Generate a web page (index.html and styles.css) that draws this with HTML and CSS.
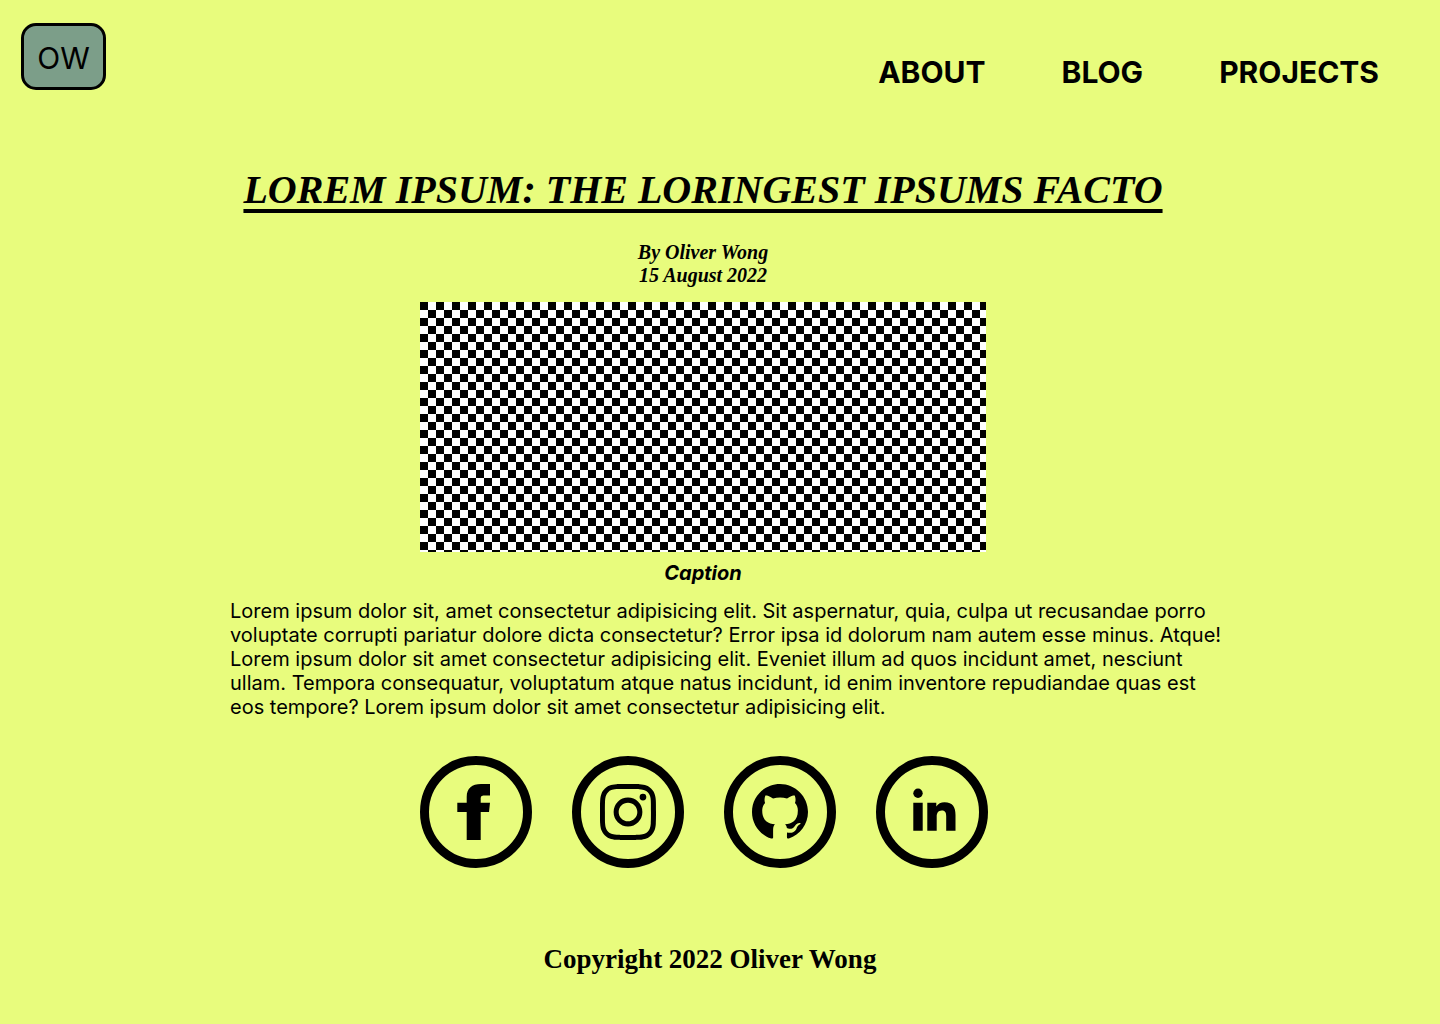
FILE: index.html
```html
<!DOCTYPE html>
<html lang="en">
<head>
<meta charset="utf-8">
<meta name="viewport" content="width=device-width, initial-scale=1">
<title>Oliver Wong</title>
<link rel="stylesheet" href="styles.css">
</head>
<body>
<header class="site-header">
  <a class="logo" href="#">OW</a>
  <nav class="site-nav">
    <a href="#">ABOUT</a>
    <a href="#">BLOG</a>
    <a href="#">PROJECTS</a>
  </nav>
</header>
<main class="post">
  <div class="post-head">
    <h1 class="title">LOREM IPSUM: THE LORINGEST IPSUMS FACTO</h1>
    <p class="byline">By Oliver Wong<br>15 August 2022</p>
    <figure class="figure">
      <div class="checker"></div>
      <figcaption>Caption</figcaption>
    </figure>
  </div>
  <p class="text">Lorem ipsum dolor sit, amet consectetur adipisicing elit. Sit aspernatur, quia, culpa ut recusandae porro voluptate corrupti pariatur dolore dicta consectetur? Error ipsa id dolorum nam autem esse minus. Atque! Lorem ipsum dolor sit amet consectetur adipisicing elit. Eveniet illum ad quos incidunt amet, nesciunt ullam. Tempora consequatur, voluptatum atque natus incidunt, id enim inventore repudiandae quas est eos tempore? Lorem ipsum dolor sit amet consectetur adipisicing elit.</p>
  <div class="socials">
    <a href="#" aria-label="Facebook"><svg viewBox="0 0 56 56"><path d="M32.700 56H18.700V28H9.300V18.700H18.700V13C18.700 4 24 0 33 0H42V11.500H36.500C33.300 11.500 32.700 12.500 32.700 15V18.700H42L41 28H32.700Z"/></svg></a>
    <a href="#" aria-label="Instagram"><svg viewBox="0 0 24 24"><path d="M12 0C8.740 0 8.333.015 7.053.072 5.775.132 4.905.333 4.140.630c-.789.306-1.459.717-2.126 1.384S.935 3.350.630 4.140C.333 4.905.131 5.775.072 7.053.012 8.333 0 8.740 0 12s.015 3.667.072 4.947c.060 1.277.261 2.148.558 2.913.306.788.717 1.459 1.384 2.126.667.666 1.336 1.079 2.126 1.384.766.296 1.636.499 2.913.558C8.333 23.988 8.740 24 12 24s3.667-.015 4.947-.072c1.277-.060 2.148-.262 2.913-.558.788-.306 1.459-.718 2.126-1.384.666-.667 1.079-1.335 1.384-2.126.296-.765.499-1.636.558-2.913.060-1.280.072-1.687.072-4.947s-.015-3.667-.072-4.947c-.060-1.277-.262-2.149-.558-2.913-.306-.789-.718-1.459-1.384-2.126C21.319 1.347 20.651.935 19.860.630c-.765-.297-1.636-.499-2.913-.558C15.667.012 15.260 0 12 0zm0 2.160c3.203 0 3.585.016 4.850.071 1.170.055 1.805.249 2.227.415.562.217.960.477 1.382.896.419.420.679.819.896 1.381.164.422.360 1.057.413 2.227.057 1.266.070 1.646.070 4.850s-.015 3.585-.074 4.850c-.061 1.170-.256 1.805-.421 2.227-.224.562-.479.960-.899 1.382-.419.419-.824.679-1.380.896-.420.164-1.065.360-2.235.413-1.274.057-1.649.070-4.859.070-3.211 0-3.586-.015-4.859-.074-1.171-.061-1.816-.256-2.236-.421-.569-.224-.960-.479-1.379-.899-.421-.419-.690-.824-.900-1.380-.165-.420-.359-1.065-.420-2.235-.045-1.260-.061-1.649-.061-4.844 0-3.196.016-3.586.061-4.861.061-1.170.255-1.814.420-2.234.210-.570.479-.960.900-1.381.419-.419.810-.689 1.379-.898.420-.166 1.051-.361 2.221-.421 1.275-.045 1.650-.060 4.859-.060zm0 3.678a6.162 6.162 0 100 12.324 6.162 6.162 0 100-12.324zM12 16c-2.210 0-4-1.790-4-4s1.790-4 4-4 4 1.790 4 4-1.790 4-4 4zm7.846-10.405a1.440 1.440 0 11-2.880 0 1.440 1.440 0 012.880 0z"/></svg></a>
    <a href="#" aria-label="GitHub"><svg viewBox="0 0 24 24"><g transform="matrix(-1 0 0 1 24 0)"><path d="M12 0C5.370 0 0 5.370 0 12c0 5.303 3.438 9.800 8.205 11.385.600.113.820-.258.820-.577 0-.285-.010-1.040-.015-2.040-3.338.724-4.042-1.610-4.042-1.610C4.422 17.773 3.633 17.403 3.633 17.403c-1.087-.744.084-.729.084-.729 1.205.084 1.838 1.236 1.838 1.236 1.070 1.835 2.809 1.305 3.495.998.108-.776.417-1.305.760-1.605-2.665-.300-5.466-1.332-5.466-5.930 0-1.310.465-2.380 1.235-3.220-.135-.303-.540-1.523.105-3.176 0 0 1.005-.322 3.300 1.230.960-.267 1.980-.399 3-.405 1.020.006 2.040.138 3 .405 2.280-1.552 3.285-1.230 3.285-1.230.645 1.653.240 2.873.120 3.176.765.840 1.230 1.910 1.230 3.220 0 4.610-2.805 5.625-5.475 5.920.420.360.810 1.096.810 2.220 0 1.606-.015 2.896-.015 3.286 0 .315.210.690.825.570C20.565 21.795 24 17.295 24 12c0-6.630-5.370-12-12-12"/></g></svg></a>
    <a href="#" aria-label="LinkedIn"><svg viewBox="0 0 56 56"><circle cx="14" cy="9.300" r="4.700"/><path d="M9.300 18.700H18.700V46.700H9.300ZM23.300 18.700H32.300V22.500C34 19.800 37 18.300 40.500 18.300 49 18.300 51.500 23.500 51.500 31V46.700H42.200V32.500C42.200 29 41.500 26.500 37.800 26.500 34 26.500 32.700 29.300 32.700 32.500V46.700H23.300Z"/></svg></a>
  </div>
</main>
<footer class="site-footer">Copyright 2022 Oliver Wong</footer>
</body>
</html>
```
FILE: styles.css
```css
* { box-sizing: border-box; }

body {
  margin: 0;
  background: #e8fc7d;
  color: #000;
  font-family: Inter, "Liberation Sans", sans-serif;
}

a { color: inherit; text-decoration: none; }

.site-header {
  display: flex;
  justify-content: space-between;
  align-items: flex-start;
  padding: 23px 61px 0 21px;
}

.logo {
  display: flex;
  align-items: center;
  justify-content: center;
  width: 85px;
  height: 67px;
  padding-top: 2px;
  border: 3px solid #000;
  border-radius: 15px;
  background: #7c9e89;
  font-size: 30px;
  font-weight: 400;
}

.site-nav {
  display: flex;
  gap: 76px;
  padding-top: 31px;
  font-size: 30px;
  line-height: 36px;
  font-weight: 700;
}

.post { padding: 74px 210px 0 230px; }

.post-head { padding-right: 54px; text-align: center; }

.title {
  margin: 0;
  font: italic 700 40px/52px "Liberation Serif", serif;
  text-decoration: underline;
  text-decoration-thickness: 4px;
  text-underline-offset: 6px;
  white-space: nowrap;
}

.byline {
  margin: 25px 0 15px;
  font: italic 700 20px/23px "Liberation Serif", serif;
}

.figure { width: 566px; margin: 0 auto; }

.checker {
  height: 250px;
  background: repeating-conic-gradient(#fff 0 25%, #000 0 50%) 0 0 / 16px 16px;
}

.figure figcaption {
  padding-top: 9px;
  font-size: 20px;
  line-height: 24px;
  font-weight: 700;
  font-style: italic;
}

.text {
  margin: 14px 0 0;
  font-size: 20px;
  line-height: 24px;
}

.socials {
  display: flex;
  justify-content: center;
  gap: 40px;
  padding: 37px 52px 0 0;
}

.socials a {
  display: flex;
  align-items: center;
  justify-content: center;
  width: 112px;
  height: 112px;
  border: 9px solid #000;
  border-radius: 50%;
}

.socials svg { width: 56px; height: 56px; }

.site-footer {
  padding: 75px 20px 48px 0;
  font: 700 27px/32px "Liberation Serif", serif;
  text-align: center;
}
```
